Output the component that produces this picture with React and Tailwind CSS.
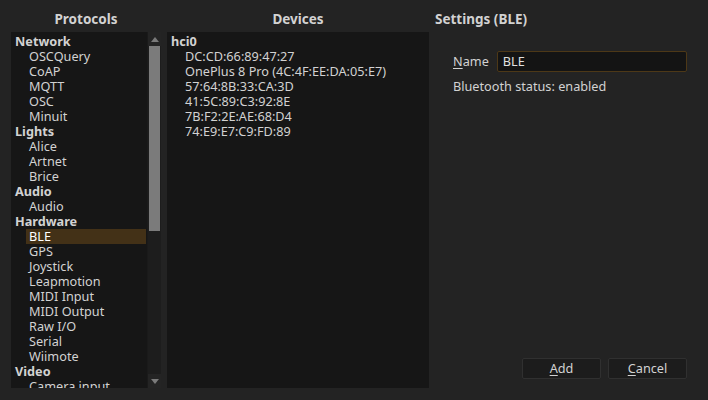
import React from 'react';

const protocols = [
  { name: 'Network', items: ['OSCQuery', 'CoAP', 'MQTT', 'OSC', 'Minuit'] },
  { name: 'Lights', items: ['Alice', 'Artnet', 'Brice'] },
  { name: 'Audio', items: ['Audio'] },
  { name: 'Hardware', items: ['BLE', 'GPS', 'Joystick', 'Leapmotion', 'MIDI Input', 'MIDI Output', 'Raw I/O', 'Serial', 'Wiimote'] },
  { name: 'Video', items: ['Camera input'] },
];

const devices = [
  'DC:CD:66:89:47:27',
  'OnePlus 8 Pro (4C:4F:EE:DA:05:E7)',
  '57:64:8B:33:CA:3D',
  '41:5C:89:C3:92:8E',
  '7B:F2:2E:AE:68:D4',
  '74:E9:E7:C9:FD:89',
];

function Scrollbar() {
  return (
    <div className="w-[14px] flex flex-col bg-[#1d1d1d] border-l border-[#1a1a1a]">
      <div className="h-[14px] flex items-center justify-center bg-[#242424]">
        <div className="w-0 h-0 border-l-[4px] border-r-[4px] border-b-[5px] border-l-transparent border-r-transparent border-b-[#7a7a7a]" />
      </div>
      <div className="mx-[1px] h-[185px] bg-[#7b7b7b]" />
      <div className="flex-1" />
      <div className="h-[14px] flex items-center justify-center bg-[#242424]">
        <div className="w-0 h-0 border-l-[4px] border-r-[4px] border-t-[5px] border-l-transparent border-r-transparent border-t-[#7a7a7a]" />
      </div>
    </div>
  );
}

export default function App() {
  return (
    <div className="w-[708px] h-[400px] bg-[#232323] text-[#d2d2d2] text-[12.7px] leading-[15px] flex overflow-hidden" style={{ fontFamily: '"Noto Sans", sans-serif' }}>
      <div className="w-[161px] pl-[11px] flex flex-col">
        <div className="h-[32px] pt-[11px] text-center font-bold text-[13.5px] leading-[16px]">Protocols</div>
        <div className="h-[356px] flex bg-[#161616] overflow-hidden">
          <div className="flex-1 pt-[2px] overflow-hidden">
            {protocols.map(p => (
              <div key={p.name}>
                <div className="pl-[4px] font-bold whitespace-nowrap">{p.name}</div>
                {p.items.map(it => (
                  <div key={it} className={`ml-[15px] pl-[3px] mr-[1px] whitespace-nowrap ${it==='BLE'?'bg-[#433117] text-white':''}`}>{it}</div>
                ))}
              </div>
            ))}
          </div>
          <Scrollbar />
        </div>
      </div>
      <div className="w-[268px] pl-[6px] flex flex-col">
        <div className="h-[32px] pt-[11px] text-center font-bold text-[13.5px] leading-[16px]">Devices</div>
        <div className="h-[356px] bg-[#161616] pt-[2px]">
          <div className="pl-[4px] font-bold">hci0</div>
          {devices.map(d => (
            <div key={d} className="pl-[18px] whitespace-nowrap">{d}</div>
          ))}
        </div>
      </div>
      <div className="flex-1 pl-[6px] pr-[21px] flex flex-col">
        <div className="h-[32px] pt-[11px] font-bold text-[13.5px] leading-[16px]">Settings (BLE)</div>
        <div className="pl-[18px] pt-[19px]">
          <div className="flex items-center gap-[8px]">
            <span><span className="underline underline-offset-2">N</span>ame</span>
            <div className="flex-1 h-[21px] bg-[#141414] border border-[#4d3817] rounded-[2px] px-[5px] flex items-center text-[#e0e0e0]">BLE</div>
          </div>
          <div className="mt-[7px]">Bluetooth status: enabled</div>
        </div>
        <div className="flex-1" />
        <div className="flex justify-end gap-[7px] mb-[21px]">
          <div className="w-[79px] h-[21px] bg-[#1c1c1c] border border-[#303030] rounded-[2px] flex items-center justify-center"><span><span className="underline underline-offset-2">A</span>dd</span></div>
          <div className="w-[79px] h-[21px] bg-[#1c1c1c] border border-[#303030] rounded-[2px] flex items-center justify-center"><span><span className="underline underline-offset-2">C</span>ancel</span></div>
        </div>
      </div>
    </div>
  );
}
